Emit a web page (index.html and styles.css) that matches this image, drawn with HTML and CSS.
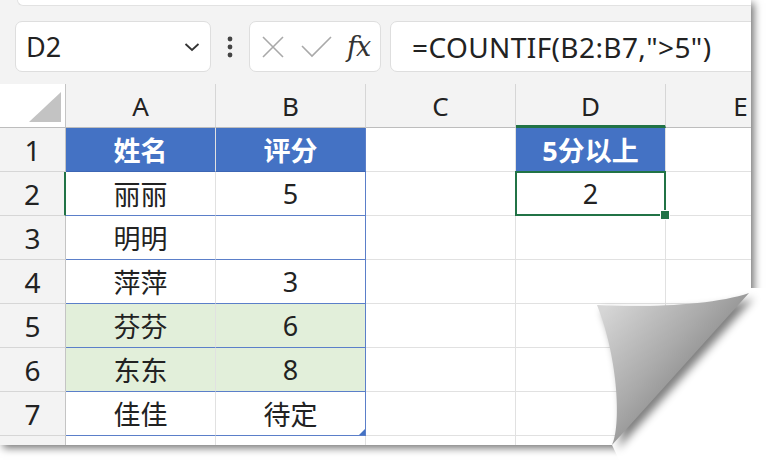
FILE: index.html
```html
<!DOCTYPE html>
<html lang="zh">
<head>
  <meta charset="UTF-8" />
  <title>COUNTIF</title>
  <link rel="stylesheet" href="styles.css">
</head>
<body>

  <div class="stage">
    <div class="paper">
      <div class="toolbar">
        <div class="ribbon-edge"></div>
        <div class="bar">
          <div class="namebox">
            <span>D2</span>
            <svg width="16" height="10" viewBox="0 0 16 10"><polyline points="1.5,2 8,8 14.5,2" fill="none" stroke="#333" stroke-width="1.8"/></svg>
          </div>
          <div class="grip">
            <svg width="8" height="22" viewBox="0 0 8 22"><circle cx="4" cy="3" r="2.4" fill="#444"/><circle cx="4" cy="11" r="2.4" fill="#444"/><circle cx="4" cy="19" r="2.4" fill="#444"/></svg>
          </div>
          <div class="fbtns">
            <svg width="22" height="22" viewBox="0 0 22 22"><path d="M1,1 L21,21 M21,1 L1,21" stroke="#a9a9a9" stroke-width="1.6" fill="none"/></svg>
            <svg width="31" height="23" viewBox="0 0 31 23"><polyline points="1,11 11,21 30,2" stroke="#a9a9a9" stroke-width="1.6" fill="none"/></svg>
            <span class="fx">fx</span>
          </div>
          <div class="formula">=COUNTIF(B2:B7,"&gt;5")</div>
        </div>
      </div>

      <div class="sheet">
        <div class="corner"><span class="tri"></span></div>
        <div class="ch">A</div>
        <div class="ch">B</div>
        <div class="ch">C</div>
        <div class="ch on">D</div>
        <div class="ch">E</div>

        <div class="rh">1</div>
        <div class="c th">姓名</div>
        <div class="c th tr">评分</div>
        <div class="c"></div>
        <div class="c th">5分以上</div>
        <div class="c"></div>

        <div class="rh on">2</div>
        <div class="c tb">丽丽</div>
        <div class="c tb tr">5</div>
        <div class="c"></div>
        <div class="c sel">2</div>
        <div class="c"></div>

        <div class="rh">3</div>
        <div class="c tb">明明</div>
        <div class="c tb tr"></div>
        <div class="c"></div>
        <div class="c"></div>
        <div class="c"></div>

        <div class="rh">4</div>
        <div class="c tb">萍萍</div>
        <div class="c tb tr">3</div>
        <div class="c"></div>
        <div class="c"></div>
        <div class="c"></div>

        <div class="rh">5</div>
        <div class="c tb hit">芬芬</div>
        <div class="c tb tr hit">6</div>
        <div class="c"></div>
        <div class="c"></div>
        <div class="c"></div>

        <div class="rh">6</div>
        <div class="c tb hit">东东</div>
        <div class="c tb tr hit">8</div>
        <div class="c"></div>
        <div class="c"></div>
        <div class="c"></div>

        <div class="rh">7</div>
        <div class="c tb">佳佳</div>
        <div class="c tb tr resize">待定</div>
        <div class="c"></div>
        <div class="c"></div>
        <div class="c"></div>

        <div class="rh"></div>
        <div class="c"></div>
        <div class="c"></div>
        <div class="c"></div>
        <div class="c"></div>
        <div class="c"></div>
      </div>
    </div>

    <!-- page curl over the bottom right corner -->
    <svg class="curl" width="183" height="190" viewBox="0 0 183 190">
      <defs>
        <linearGradient id="flapFill" x1="0.05" y1="0.1" x2="0.8" y2="0.75">
          <stop offset="0" stop-color="#d6d6d6"/>
          <stop offset="0.5" stop-color="#aaaaaa"/>
          <stop offset="1" stop-color="#777"/>
        </linearGradient>
        <filter id="soft" x="-30%" y="-30%" width="160%" height="160%">
          <feGaussianBlur stdDeviation="4"/>
        </filter>
      </defs>
      <polygon points="157,8 183,8 183,190 34,190 22,165" fill="#fff"/>
      <path d="M7,25 C55,28 125,25 159,13 L22,165 C31,148 29,80 7,25 Z" fill="#000" opacity="0.5" transform="translate(5,5)" filter="url(#soft)"/>
      <path d="M7,25 C55,28 125,25 159,13 L22,165 C31,148 29,80 7,25 Z" fill="url(#flapFill)"/>
    </svg>
  </div>

</body>
</html>
```

FILE: styles.css
```css
* {
  box-sizing: border-box;
}

body {
  margin: 0;
  background: #fff;
  font-family: "Noto Sans", "Noto Sans CJK SC", sans-serif;
  color: #222;
}

.stage {
  position: relative;
  width: 773px;
  height: 470px;
  overflow: hidden;
}

.paper {
  width: 751px;
  height: 445px;
  background: #f3f3f3;
  overflow: hidden;
  box-shadow: 3px 3px 8px rgba(0, 0, 0, 0.55);
}

/* formula bar */

.toolbar {
  height: 84px;
}

.ribbon-edge {
  height: 6px;
  margin-left: 17px;
  background: #fff;
  border-left: 1px solid #e2e2e2;
  border-bottom: 1px solid #e2e2e2;
  border-bottom-left-radius: 8px;
}

.bar {
  display: flex;
  height: 51px;
  margin-top: 15px;
  padding-left: 15px;
}

.namebox {
  width: 196px;
  background: #fff;
  border: 1px solid #dedede;
  border-radius: 7px;
  display: flex;
  align-items: center;
  justify-content: space-between;
  padding: 0 10px 0 10px;
  font-size: 27px;
}

.grip {
  width: 38px;
  display: flex;
  align-items: center;
  justify-content: center;
}

.fbtns {
  width: 132px;
  background: #fff;
  border: 1px solid #dedede;
  border-radius: 7px;
  display: flex;
  align-items: center;
  padding-left: 12px;
  gap: 17px;
}

.fx {
  font-family: "DejaVu Serif", "Liberation Serif", serif;
  font-style: italic;
  font-size: 27px;
  color: #333;
  margin-left: -2px;
  letter-spacing: -1px;
}

.formula {
  flex: 1;
  margin-left: 9px;
  margin-right: -20px;
  background: #fff;
  border: 1px solid #dedede;
  border-radius: 7px;
  padding-left: 21px;
  display: flex;
  align-items: center;
  font-size: 28px;
  letter-spacing: 0.4px;
}

/* grid */

.sheet {
  display: grid;
  grid-template-columns: 66px repeat(5, 150px);
  grid-auto-rows: 44px;
  background: #fff;
}

.corner {
  display: flex;
  align-items: flex-end;
  justify-content: flex-end;
  padding: 0 4px 5px 0;
  border-right: 1px solid #c4c4c4;
  border-bottom: 1px solid #bdbdbd;
}

.tri {
  width: 0;
  height: 0;
  border-left: 32px solid transparent;
  border-bottom: 30px solid #c3c3c3;
}

.ch {
  background: #f3f3f3;
  border-right: 1px solid #d6d6d6;
  border-bottom: 1px solid #bdbdbd;
  display: flex;
  align-items: center;
  justify-content: center;
  font-size: 26px;
}

.ch.on {
  border-bottom: 3px solid #217346;
  padding-top: 2px;
}

.rh {
  background: #f3f3f3;
  border-right: 1px solid #c4c4c4;
  border-bottom: 1px solid #d6d6d6;
  display: flex;
  align-items: center;
  justify-content: center;
  font-size: 28px;
}

.rh.on {
  border-right: 2px solid #217346;
}

.c {
  border-right: 1px solid #e1e1e1;
  border-bottom: 1px solid #e1e1e1;
  display: flex;
  align-items: center;
  justify-content: center;
  font-size: 27px;
}

.c.th {
  background: #4472c4;
  color: #fff;
  font-weight: bold;
  border-bottom-color: #3d66b4;
}

.c.tb {
  border-bottom: 1.5px solid #5b7fc9;
}

.c.tr {
  border-right: 1.5px solid #5b7fc9;
}

.c.hit {
  background: #e2efda;
}

.c.sel {
  position: relative;
}

.c.sel::before {
  content: "";
  position: absolute;
  left: -1px;
  top: -1px;
  right: -1px;
  bottom: -1px;
  border: 2px solid #217346;
}

.c.sel::after {
  content: "";
  position: absolute;
  right: -5px;
  bottom: -5px;
  width: 8px;
  height: 8px;
  background: #217346;
  border: 1px solid #fff;
}

.c.resize {
  position: relative;
}

.c.resize::after {
  content: "";
  position: absolute;
  right: 0;
  bottom: 0;
  width: 0;
  height: 0;
  border-left: 6px solid transparent;
  border-bottom: 6px solid #4472c4;
}

.curl {
  position: absolute;
  left: 590px;
  top: 280px;
}
```
